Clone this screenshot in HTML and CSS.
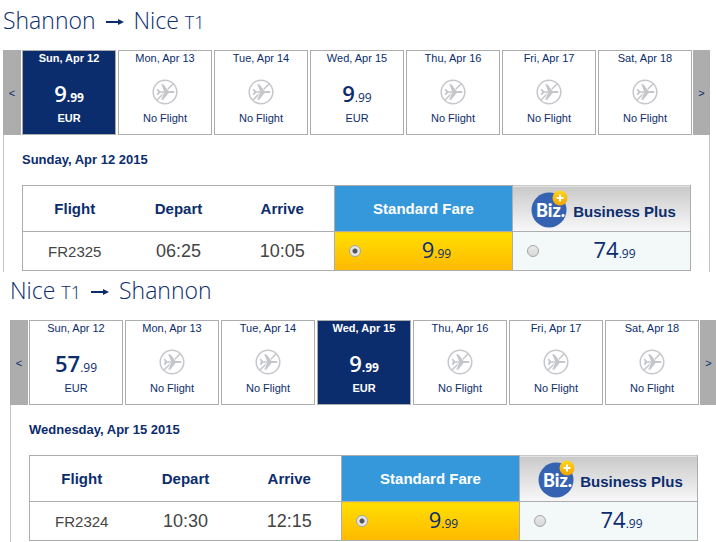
FILE: index.html
```
<!DOCTYPE html>
<html lang="en">
<head>
  <meta charset="UTF-8" />
  <meta name="viewport" content="width=device-width, initial-scale=1.0"/>
  <title>Select Flights</title>
  <link rel="stylesheet" href="styles.css">
</head>
<body>
  <!-- shared icons -->
  <svg class="icon-defs" width="0" height="0" aria-hidden="true">
    <defs>
      <linearGradient id="badge-fill" x1="0" y1="0" x2="0" y2="1">
        <stop offset="0" stop-color="#ffd61c"/>
        <stop offset="1" stop-color="#f0a400"/>
      </linearGradient>
      <symbol id="arrow" viewBox="0 0 18 10">
        <path d="M0 4h12V2l6 3-6 3V6H0z" fill="#0b2d6d"/>
      </symbol>
      <symbol id="no-flight" viewBox="0 0 26 26">
        <circle cx="13" cy="13" r="11.8" fill="none" stroke="#c6c7cc" stroke-width="1.5"/>
        <path d="M5 21L21.5 4.5" stroke="#c6c7cc" stroke-width="1.6"/>
        <path d="M4.8 10h1.5l1.9 2.2h3.9L9.2 5.2h2.2l5.2 6.8h3c2.200 0 3.200.5 3.200 1s-1 1-3.200 1h-3l-5.200 6.800H9.200l2.900-7H8.200L6.300 16H4.800l1-3z" fill="#c6c7cc" stroke="#fff" stroke-width="1.2" paint-order="stroke"/>
      </symbol>
      <symbol id="biz" viewBox="0 0 38 38">
        <circle cx="18" cy="20" r="17.5" fill="#3563b1"/>
        <text x="5" y="27" class="biz-text">Biz.</text>
        <circle cx="29" cy="8" r="7.5" fill="url(#badge-fill)"/>
        <path d="M29 4.5v7M25.5 8h7" stroke="#fff" stroke-width="2"/>
      </symbol>
    </defs>
  </svg>

  <section class="trip">
    <h2>Shannon <svg class="arrow"><use href="#arrow"/></svg> Nice <small>T1</small></h2>

    <div class="strip">
      <button class="nav" type="button" aria-label="Previous days">&lt;</button>
      <div class="days">
        <button class="day selected" type="button">
          <span>Sun, Apr 12</span>
          <span class="price">9<small>.99</small></span>
          <span>EUR</span>
        </button>
        <button class="day" type="button">
          <span>Mon, Apr 13</span>
          <svg class="no-flight"><use href="#no-flight"/></svg>
          <span>No Flight</span>
        </button>
        <button class="day" type="button">
          <span>Tue, Apr 14</span>
          <svg class="no-flight"><use href="#no-flight"/></svg>
          <span>No Flight</span>
        </button>
        <button class="day" type="button">
          <span>Wed, Apr 15</span>
          <span class="price">9<small>.99</small></span>
          <span>EUR</span>
        </button>
        <button class="day" type="button">
          <span>Thu, Apr 16</span>
          <svg class="no-flight"><use href="#no-flight"/></svg>
          <span>No Flight</span>
        </button>
        <button class="day" type="button">
          <span>Fri, Apr 17</span>
          <svg class="no-flight"><use href="#no-flight"/></svg>
          <span>No Flight</span>
        </button>
        <button class="day" type="button">
          <span>Sat, Apr 18</span>
          <svg class="no-flight"><use href="#no-flight"/></svg>
          <span>No Flight</span>
        </button>
      </div>
      <button class="nav" type="button" aria-label="Next days">&gt;</button>
    </div>

    <div class="details">
      <h3>Sunday, Apr 12 2015</h3>
      <table>
        <thead>
          <tr>
            <th>Flight</th>
            <th>Depart</th>
            <th>Arrive</th>
            <th class="fare standard">Standard Fare</th>
            <th class="fare business">
              <div class="biz-head"><svg class="biz"><use href="#biz"/></svg><span>Business Plus</span></div>
            </th>
          </tr>
        </thead>
        <tbody>
          <tr>
            <td class="number">FR2325</td>
            <td>06:25</td>
            <td>10:05</td>
            <td class="standard">
              <label><input type="radio" name="outbound" checked><span class="price">9<small>.99</small></span></label>
            </td>
            <td class="business">
              <label><input type="radio" name="outbound"><span class="price">74<small>.99</small></span></label>
            </td>
          </tr>
        </tbody>
      </table>
    </div>
  </section>

  <section class="trip return">
    <h2>Nice <small>T1</small> <svg class="arrow"><use href="#arrow"/></svg> Shannon</h2>

    <div class="strip">
      <button class="nav" type="button" aria-label="Previous days">&lt;</button>
      <div class="days">
        <button class="day" type="button">
          <span>Sun, Apr 12</span>
          <span class="price">57<small>.99</small></span>
          <span>EUR</span>
        </button>
        <button class="day" type="button">
          <span>Mon, Apr 13</span>
          <svg class="no-flight"><use href="#no-flight"/></svg>
          <span>No Flight</span>
        </button>
        <button class="day" type="button">
          <span>Tue, Apr 14</span>
          <svg class="no-flight"><use href="#no-flight"/></svg>
          <span>No Flight</span>
        </button>
        <button class="day selected" type="button">
          <span>Wed, Apr 15</span>
          <span class="price">9<small>.99</small></span>
          <span>EUR</span>
        </button>
        <button class="day" type="button">
          <span>Thu, Apr 16</span>
          <svg class="no-flight"><use href="#no-flight"/></svg>
          <span>No Flight</span>
        </button>
        <button class="day" type="button">
          <span>Fri, Apr 17</span>
          <svg class="no-flight"><use href="#no-flight"/></svg>
          <span>No Flight</span>
        </button>
        <button class="day" type="button">
          <span>Sat, Apr 18</span>
          <svg class="no-flight"><use href="#no-flight"/></svg>
          <span>No Flight</span>
        </button>
      </div>
      <button class="nav" type="button" aria-label="Next days">&gt;</button>
    </div>

    <div class="details">
      <h3>Wednesday, Apr 15 2015</h3>
      <table>
        <thead>
          <tr>
            <th>Flight</th>
            <th>Depart</th>
            <th>Arrive</th>
            <th class="fare standard">Standard Fare</th>
            <th class="fare business">
              <div class="biz-head"><svg class="biz"><use href="#biz"/></svg><span>Business Plus</span></div>
            </th>
          </tr>
        </thead>
        <tbody>
          <tr>
            <td class="number">FR2324</td>
            <td>10:30</td>
            <td>12:15</td>
            <td class="standard">
              <label><input type="radio" name="return" checked><span class="price">9<small>.99</small></span></label>
            </td>
            <td class="business">
              <label><input type="radio" name="return"><span class="price">74<small>.99</small></span></label>
            </td>
          </tr>
        </tbody>
      </table>
    </div>
  </section>
</body>
</html>
```
FILE: styles.css
```
* {
  box-sizing: border-box;
}

body {
  margin: 0;
  padding-top: 3px;
  background: #fff;
  color: #0b2d6d;
  font-family: "Liberation Sans", Arial, sans-serif;
  overflow-x: hidden;
}

.icon-defs {
  display: block;
}

.trip {
  margin: 0 6px 0 3px;
}

.trip.return {
  margin: 1px -1px 0 10px;
}

h2 {
  margin: 0;
  height: 47px;
  line-height: 34px;
  font-family: "Open Sans", sans-serif;
  font-size: 23px;
  font-weight: 300;
}

h2 small {
  font-size: 18px;
}

.arrow {
  width: 18px;
  height: 10px;
  margin: 0 4px;
  vertical-align: 2px;
}

/* day picker */
.strip {
  display: grid;
  grid-template-columns: 18px 1fr 17px;
  gap: 1px;
}

.nav {
  padding: 0;
  border: none;
  background: #adadad;
  color: #0b2d6d;
  font-family: inherit;
  font-size: 11px;
}

.days {
  display: grid;
  grid-template-columns: repeat(7, 1fr);
  gap: 2px;
}

.day {
  display: grid;
  grid-template-rows: 14px 1fr 14px;
  justify-items: center;
  align-items: end;
  height: 85px;
  padding: 0 0 9px;
  border: 1px solid #adadad;
  background: #fff;
  color: #0b2d6d;
  font-family: inherit;
  font-size: 11px;
  line-height: 14px;
}

.day.selected {
  background: #0b2d6d;
  color: #fff;
  font-weight: bold;
}

.no-flight {
  width: 26px;
  height: 26px;
  margin-bottom: 6px;
}

.price {
  font-family: "Open Sans", sans-serif;
  font-size: 22px;
  line-height: 26px;
}

.price small {
  font-size: 12px;
}

.day .price {
  font-weight: 600;
}

.day .price small {
  font-weight: 400;
}

.day.selected .price small {
  font-weight: bold;
}

/* flight details */
.details {
  padding: 0 18px 1px;
  border: 1px solid #c4c4c4;
  border-width: 0 1px;
}

h3 {
  margin: 0;
  font-size: 13px;
  line-height: 50px;
}

table {
  width: 100%;
  table-layout: fixed;
  border-collapse: collapse;
  border: 1px solid #adadad;
}

th,
td {
  padding: 0;
  border-bottom: 1px solid #adadad;
  text-align: center;
}

th {
  height: 46px;
  font-size: 15px;
}

td {
  height: 39px;
  color: #444;
  font-size: 18px;
}

.number {
  font-size: 15px;
}

.fare {
  width: 178px;
}

.standard,
.business {
  border: 1px solid #adadad;
}

th.standard {
  background: #3598db;
  color: #fff;
}

th.business {
  border-top-color: #c9c9c9;
  background: linear-gradient(#c9c9c9, #f8f8fa);
}

td.standard {
  background: linear-gradient(#ffdf00, #ffb900);
}

td.business {
  background: #f3f8f9;
}

.biz-head {
  display: flex;
  justify-content: center;
  align-items: center;
  gap: 4px;
  padding-left: 4px;
}

.biz-head span {
  padding-top: 6px;
}

.biz {
  width: 38px;
  height: 38px;
}

.biz-text {
  fill: #fff;
  font-family: "Liberation Sans Narrow", Lato, sans-serif;
  font-size: 18px;
  font-weight: 900;
}

label {
  display: flex;
  align-items: center;
  color: #0b2d6d;
}

label .price {
  flex: 1;
}

input[type="radio"] {
  appearance: none;
  width: 12px;
  height: 12px;
  margin: 0 0 0 14px;
  border: 1px solid #a5a5a5;
  border-radius: 50%;
  background: linear-gradient(#e9e9e9, #d8d8d8);
}

input[type="radio"]:checked {
  background: radial-gradient(circle, #555 0 2px, #e6e6e6 3px);
}
```
